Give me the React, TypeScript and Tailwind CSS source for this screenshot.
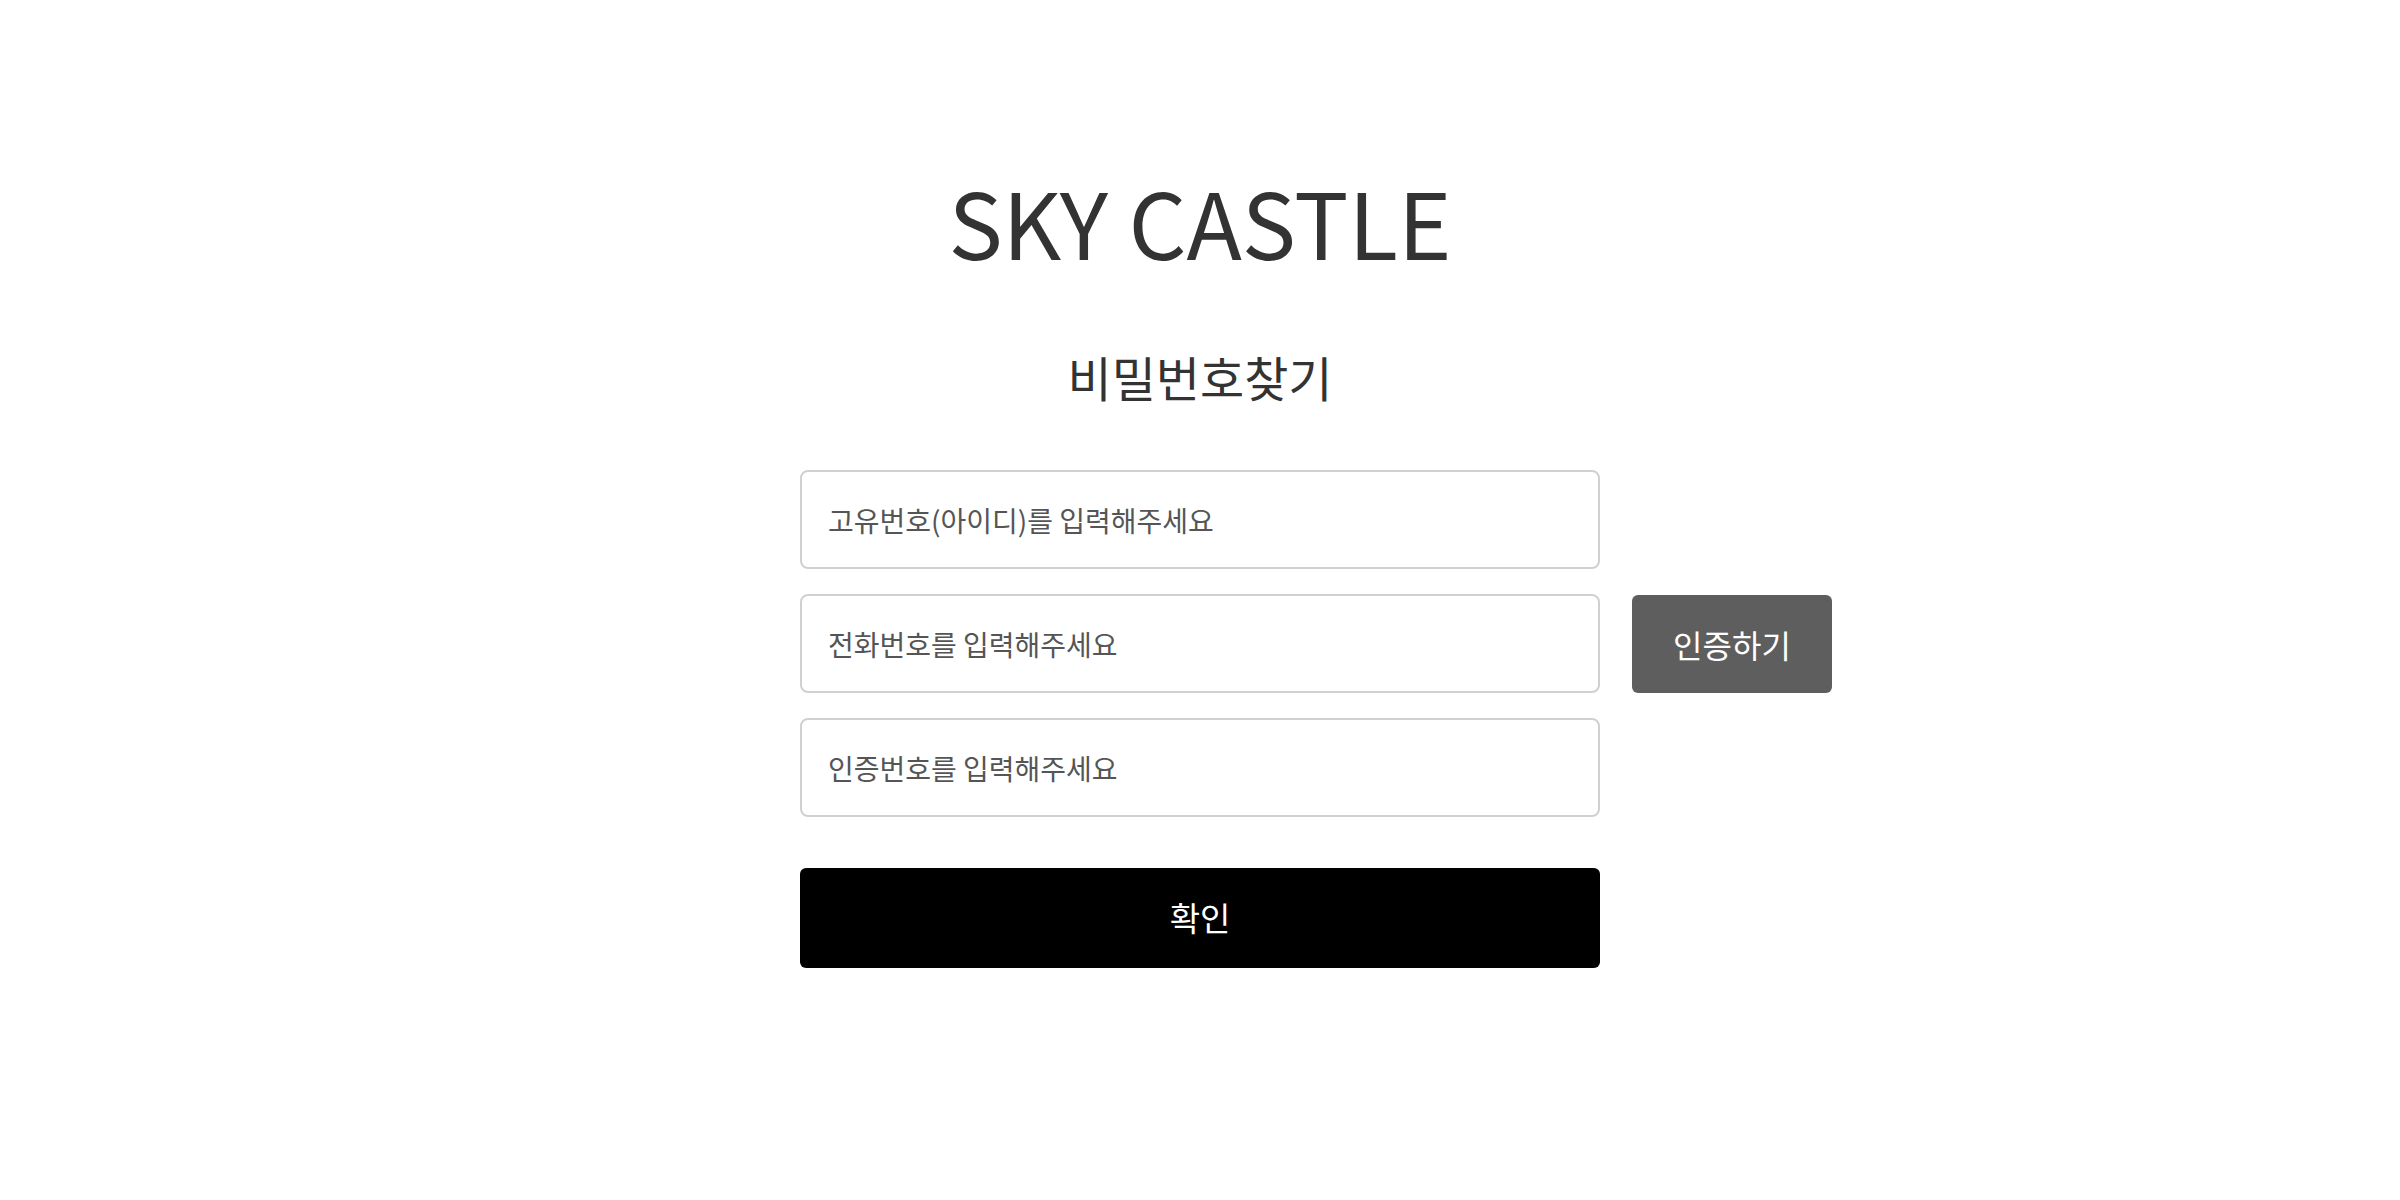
export default function App() {
  return (
    <div
      className="min-h-screen bg-white flex flex-col items-center pt-[175px]"
      style={{ fontFamily: '"Noto Sans CJK KR", "Noto Sans", sans-serif' }}
    >
      <h1 className="text-[91px] leading-none text-[#333333] font-normal">SKY CASTLE</h1>
      <h2 className="mt-[86px] text-[48px] leading-none text-[#333333] font-normal">비밀번호찾기</h2>

      <div className="mt-[70px] flex flex-col items-center gap-[25px]">
        <input
          type="text"
          placeholder="고유번호(아이디)를 입력해주세요"
          className="w-[800px] h-[99px] px-[26px] text-[28px] rounded-lg border-2 border-[#d0d0d0] placeholder:text-[#555555] outline-none"
        />
        <div className="flex items-center gap-8">
          <div className="w-[200px]" />
          <input
            type="text"
            placeholder="전화번호를 입력해주세요"
            className="w-[800px] h-[99px] px-[26px] text-[28px] rounded-lg border-2 border-[#d0d0d0] placeholder:text-[#555555] outline-none"
          />
          <button className="w-[200px] h-[98px] rounded-md bg-[#5e5e5e] text-white text-[32px]">
            인증하기
          </button>
        </div>
        <input
          type="text"
          placeholder="인증번호를 입력해주세요"
          className="w-[800px] h-[99px] px-[26px] text-[28px] rounded-lg border-2 border-[#d0d0d0] placeholder:text-[#555555] outline-none"
        />
        <button className="mt-[26px] w-[800px] h-[100px] rounded-md bg-black text-white text-[33px]">
          확인
        </button>
      </div>
    </div>
  );
}
